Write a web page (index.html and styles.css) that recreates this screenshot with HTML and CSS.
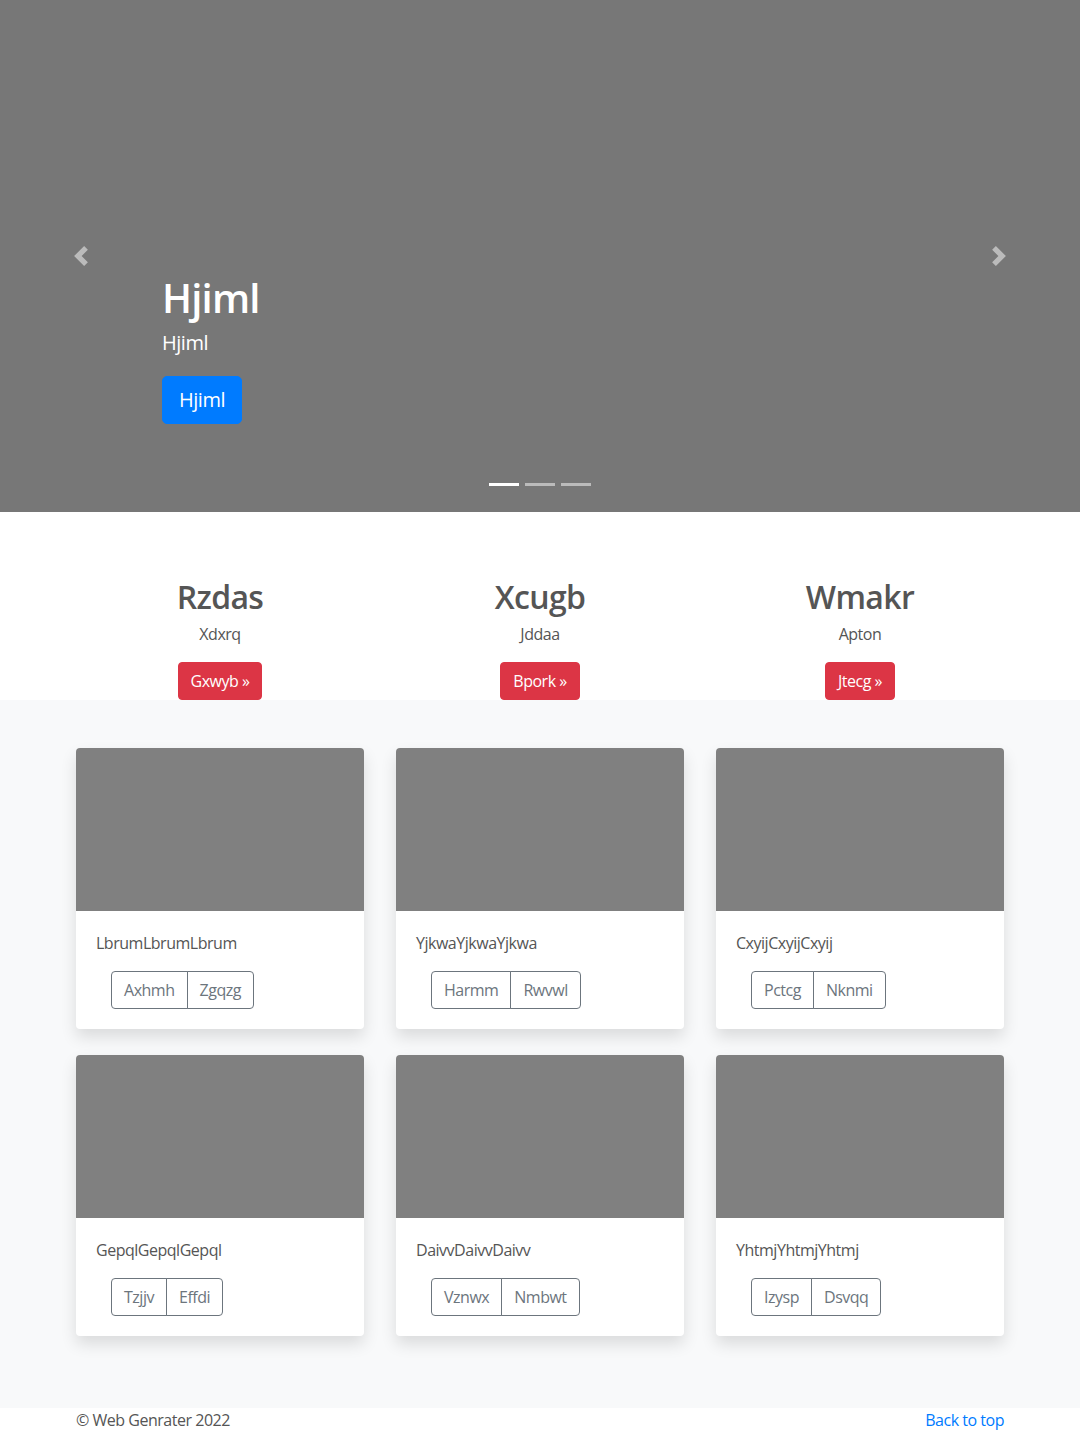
FILE: index.html
```html
<!DOCTYPE html>
<html lang="en">
<head>
<meta charset="utf-8">
<title>Carousel</title>
<link rel="stylesheet" href="styles.css">
</head>
<body>
<main>
  <section class="hero">
    <div class="indicators">
      <span class="ind active"></span><span class="ind"></span><span class="ind"></span>
    </div>
    <a class="control prev" href="#">
      <svg width="20" height="20" viewBox="0 0 8 8"><path fill="#fff" d="M5.25 0l-4 4 4 4 1.5-1.5L4.25 4l2.5-2.5L5.25 0z"/></svg>
    </a>
    <a class="control next" href="#">
      <svg width="20" height="20" viewBox="0 0 8 8"><path fill="#fff" d="M2.75 0l-1.5 1.5L3.75 4l-2.5 2.5L2.75 8l4-4-4-4z"/></svg>
    </a>
    <div class="caption">
      <h1 class="caption-title">Hjiml</h1>
      <p class="caption-text">Hjiml</p>
      <a class="btn btn-lg btn-primary" href="#">Hjiml</a>
    </div>
  </section>

  <section class="marketing">
    <div class="col">
      <h2 class="m-title">Rzdas</h2>
      <p class="m-text">Xdxrq</p>
      <a class="btn btn-danger" href="#">Gxwyb &raquo;</a>
    </div>
    <div class="col">
      <h2 class="m-title">Xcugb</h2>
      <p class="m-text">Jddaa</p>
      <a class="btn btn-danger" href="#">Bpork &raquo;</a>
    </div>
    <div class="col">
      <h2 class="m-title">Wmakr</h2>
      <p class="m-text">Apton</p>
      <a class="btn btn-danger" href="#">Jtecg &raquo;</a>
    </div>
  </section>

  <section class="album">
    <div class="grid">
      <div class="card">
        <div class="card-img"></div>
        <div class="card-body">
          <p class="card-text">LbrumLbrumLbrum</p>
          <div class="btn-group"><a class="btn btn-outline" href="#">Axhmh</a><a class="btn btn-outline" href="#">Zgqzg</a></div>
        </div>
      </div>
      <div class="card">
        <div class="card-img"></div>
        <div class="card-body">
          <p class="card-text">YjkwaYjkwaYjkwa</p>
          <div class="btn-group"><a class="btn btn-outline" href="#">Harmm</a><a class="btn btn-outline" href="#">Rwvwl</a></div>
        </div>
      </div>
      <div class="card">
        <div class="card-img"></div>
        <div class="card-body">
          <p class="card-text">CxyijCxyijCxyij</p>
          <div class="btn-group"><a class="btn btn-outline" href="#">Pctcg</a><a class="btn btn-outline" href="#">Nknmi</a></div>
        </div>
      </div>
      <div class="card">
        <div class="card-img"></div>
        <div class="card-body">
          <p class="card-text">GepqlGepqlGepql</p>
          <div class="btn-group"><a class="btn btn-outline" href="#">Tzjjv</a><a class="btn btn-outline" href="#">Effdi</a></div>
        </div>
      </div>
      <div class="card">
        <div class="card-img"></div>
        <div class="card-body">
          <p class="card-text">DaivvDaivvDaivv</p>
          <div class="btn-group"><a class="btn btn-outline" href="#">Vznwx</a><a class="btn btn-outline" href="#">Nmbwt</a></div>
        </div>
      </div>
      <div class="card">
        <div class="card-img"></div>
        <div class="card-body">
          <p class="card-text">YhtmjYhtmjYhtmj</p>
          <div class="btn-group"><a class="btn btn-outline" href="#">Izysp</a><a class="btn btn-outline" href="#">Dsvqq</a></div>
        </div>
      </div>
    </div>
  </section>

  <footer class="footer">
    <p class="copy">&copy; Web Genrater 2022</p>
    <a class="top-link" href="#">Back to top</a>
  </footer>
</main>
</body>
</html>
```

FILE: styles.css
```css
* { box-sizing: border-box; }
html, body { margin: 0; padding: 0; }
body {
  font-family: "Segoe UI", "Open Sans", "Noto Sans", sans-serif;
  font-size: 16px;
  line-height: 1.5;
  letter-spacing: -0.03em;
  color: #555;
  background: #fff;
}
a { text-decoration: none; }

.hero {
  position: relative;
  height: 512px;
  background: #777;
  overflow: hidden;
}
.indicators {
  position: absolute;
  left: 0; right: 0; bottom: 26px;
  display: flex;
  justify-content: center;
  gap: 6px;
}
.ind {
  width: 30px; height: 3px;
  background: #fff;
  opacity: .5;
}
.ind.active { opacity: 1; }
.control {
  position: absolute;
  top: 0; bottom: 0;
  width: 15%;
  display: flex;
  align-items: center;
  justify-content: center;
  opacity: .5;
}
.control svg { display: block; }
.prev { left: 0; }
.next { right: 0; }
.caption {
  position: absolute;
  left: 15%; right: 15%;
  top: 274px;
  color: #fff;
  display: flex;
  flex-direction: column;
  align-items: flex-start;
}
.caption-title {
  margin: 0 0 6px;
  font-size: 40px;
  font-weight: 600;
  letter-spacing: -0.02em;
  line-height: 1.2;
}
.caption-text {
  margin: 0 0 18px;
  font-size: 20px;
  line-height: 30px;
}
.btn {
  display: inline-block;
  font-size: 16px;
  line-height: 24px;
  padding: 6px 12px;
  border: 1px solid transparent;
  border-radius: 4px;
  text-align: center;
}
.btn-lg {
  font-size: 20px;
  line-height: 30px;
  padding: 8px 16px;
  border-radius: 5px;
}
.btn-primary { background: #007bff; border-color: #007bff; color: #fff; }
.btn-danger { background: #dc3545; border-color: #dc3545; color: #fff; }

.marketing {
  width: 960px;
  margin: 0 auto;
  padding-top: 66px;
  display: grid;
  grid-template-columns: repeat(3, 1fr);
}
.col {
  display: flex;
  flex-direction: column;
  align-items: center;
  text-align: center;
}
.m-title {
  margin: 0 0 6px;
  font-size: 32px;
  font-weight: 600;
  letter-spacing: -0.02em;
  line-height: 1.2;
}
.m-text { margin: 0 0 16px; }

.album {
  background: #f8f9fa;
  padding: 48px 0 72px;
}
.grid {
  width: 928px;
  margin: 0 auto;
  display: grid;
  grid-template-columns: repeat(3, 288px);
  column-gap: 32px;
  row-gap: 26px;
}
.card {
  background: #fff;
  border-radius: 4px;
  overflow: hidden;
  box-shadow: 0 8px 16px rgba(0,0,0,.12);
}
.card-img {
  height: 163px;
  background: #808080;
}
.card-body { padding: 20px; }
.card-text { margin: 0 0 16px; }
.btn-group {
  display: flex;
  margin-left: 15px;
}
.btn-outline {
  color: #6c757d;
  border-color: #6c757d;
  background: transparent;
  border-radius: 0;
}
.btn-outline:first-child { border-radius: 4px 0 0 4px; }
.btn-outline:last-child { border-radius: 0 4px 4px 0; margin-left: -1px; }

.footer {
  width: 928px;
  margin: 0 auto;
  display: flex;
  justify-content: space-between;
  padding-bottom: 24px;
}
.copy { margin: 0; }
.top-link { color: #007bff; }
```
